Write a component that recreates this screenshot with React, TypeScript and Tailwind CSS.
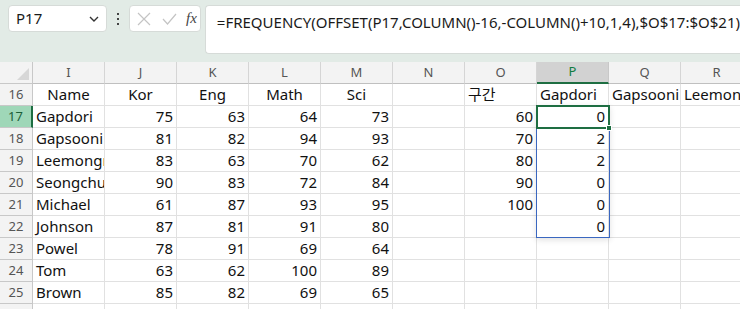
type Cell = { v: string; a?: "l" | "r" | "c" };

const cols = ["I", "J", "K", "L", "M", "N", "O", "P", "Q", "R"];

const scores: [string, number, number, number, number, string, string][] = [
  ["Gapdori", 75, 63, 64, 73, "60", "0"],
  ["Gapsooni", 81, 82, 94, 93, "70", "2"],
  ["Leemongryong", 83, 63, 70, 62, "80", "2"],
  ["Seongchunhyang", 90, 83, 72, 84, "90", "0"],
  ["Michael", 61, 87, 93, 95, "100", "0"],
  ["Johnson", 87, 81, 91, 80, "", "0"],
  ["Powel", 78, 91, 69, 64, "", ""],
  ["Tom", 63, 62, 100, 89, "", ""],
  ["Brown", 85, 82, 69, 65, "", ""],
];

const headerRow: Cell[] = [
  { v: "Name", a: "c" },
  { v: "Kor", a: "c" },
  { v: "Eng", a: "c" },
  { v: "Math", a: "c" },
  { v: "Sci", a: "c" },
  { v: "" },
  { v: "구간", a: "l" },
  { v: "Gapdori", a: "l" },
  { v: "Gapsooni", a: "l" },
  { v: "Leemongryong", a: "l" },
];

const rows: { n: number; cells: Cell[] }[] = [
  { n: 16, cells: headerRow },
  ...scores.map((r, i) => ({
    n: 17 + i,
    cells: [
      { v: r[0], a: "l" as const },
      { v: String(r[1]), a: "r" as const },
      { v: String(r[2]), a: "r" as const },
      { v: String(r[3]), a: "r" as const },
      { v: String(r[4]), a: "r" as const },
      { v: "" },
      { v: r[5], a: "r" as const },
      { v: r[6], a: "r" as const },
      { v: "" },
      { v: "" },
    ],
  })),
  { n: 26, cells: cols.map(() => ({ v: "" })) },
];

const font = { fontFamily: '"Noto Sans", "Noto Sans CJK KR", sans-serif' };

function TopBar() {
  return (
    <div className="flex h-[62px] items-start bg-[#e2ebe6] pl-2 pt-[5px]">
      {/* name box */}
      <div className="flex h-[27px] w-[101px] items-center justify-between rounded-[4px] border border-[#d6dbd8] bg-white pl-[7px] pr-[7px]">
        <span className="text-[15px] text-[#1a1a1a]">P17</span>
        <svg width="10" height="6" viewBox="0 0 10 6" className="mt-[1px]">
          <path d="M1 1l4 4 4-4" fill="none" stroke="#333" strokeWidth="1.4" />
        </svg>
      </div>
      {/* dots */}
      <div className="flex h-[27px] w-[22px] flex-col items-center justify-center gap-[3px]">
        <span className="h-[2px] w-[2px] bg-[#444]" />
        <span className="h-[2px] w-[2px] bg-[#444]" />
        <span className="h-[2px] w-[2px] bg-[#444]" />
      </div>
      {/* cancel / enter / fx */}
      <div className="flex h-[27px] w-[73px] items-center rounded-[4px] border border-[#d6dbd8] bg-white pl-[7px]">
        <svg width="14" height="14" viewBox="0 0 14 14">
          <path d="M1 1l12 12M13 1L1 13" stroke="#c4c4c4" strokeWidth="1.2" />
        </svg>
        <svg width="15" height="12" viewBox="0 0 15 12" className="ml-[11px]">
          <path d="M1 6l4.5 5L14 1" fill="none" stroke="#c4c4c4" strokeWidth="1.2" />
        </svg>
        <span
          className="ml-[9px] text-[15px] italic text-[#444]"
          style={{ fontFamily: '"Liberation Serif", serif' }}
        >
          fx
        </span>
      </div>
      {/* formula */}
      <div className="ml-[4px] h-[49px] flex-1 rounded-l-[4px] border border-r-0 border-[#d6dbd8] bg-white pl-[11px] pt-[4px]">
        <span className="whitespace-nowrap text-[15px] text-[#1a1a1a]">
          =FREQUENCY(OFFSET(P17,COLUMN()-16,-COLUMN()+10,1,4),$O$17:$O$21)
        </span>
      </div>
    </div>
  );
}

function HeaderRow() {
  return (
    <div className="flex h-[22px]">
      <div className="relative h-[22px] w-[33px] shrink-0 border-r border-b border-[#c8c8c8] bg-[#f3f3f3]">
        <div className="absolute bottom-[3px] right-[3px] h-0 w-0 border-b-[12px] border-l-[12px] border-b-[#d7d7d7] border-l-transparent" />
      </div>
      {cols.map((c) => (
        <div
          key={c}
          className={
            c === "P"
              ? "flex h-[22px] w-[72px] shrink-0 items-center justify-center border-r border-b-2 border-r-[#c8c8c8] border-b-[#1e6e42] bg-[#d2d2d2] text-[13px] text-[#107c41]"
              : "flex h-[22px] w-[72px] shrink-0 items-center justify-center border-r border-b border-[#d5d5d5] border-b-[#c0c0c0] bg-[#f3f3f3] text-[13px] text-[#555]"
          }
        >
          {c}
        </div>
      ))}
    </div>
  );
}

function Row({ n, cells }: { n: number; cells: Cell[] }) {
  const active = n === 17;
  return (
    <div className="flex h-[22px]">
      <div
        className={
          active
            ? "flex h-[22px] w-[33px] shrink-0 items-center justify-center border-r-2 border-b border-r-[#1e6e42] border-b-[#c8c8c8] bg-[#9fd7b8] text-[13px] text-[#1b5e38]"
            : "flex h-[22px] w-[33px] shrink-0 items-center justify-center border-r border-b border-[#c8c8c8] bg-[#f3f3f3] text-[13px] text-[#555]"
        }
      >
        {n}
      </div>
      {cells.map((c, i) => (
        <div
          key={i}
          className={
            "flex h-[22px] w-[72px] shrink-0 items-center overflow-hidden whitespace-nowrap border-r border-b border-[#e1e1e1] px-[3px] text-[15px] text-[#111] " +
            (c.a === "r" ? "justify-end" : c.a === "c" ? "justify-center" : "justify-start")
          }
        >
          {c.v}
        </div>
      ))}
    </div>
  );
}

export default function App() {
  return (
    <div className="h-[309px] w-[740px] overflow-hidden bg-white" style={font}>
      <TopBar />
      <div className="relative">
        <HeaderRow />
        {rows.map((r) => (
          <Row key={r.n} n={r.n} cells={r.cells} />
        ))}
        {/* spill range P17:P22 */}
        <div className="pointer-events-none absolute left-[536px] top-[43px] h-[133px] w-[74px] border border-[#3a67c0] shadow-[0_2px_6px_rgba(0,0,0,0.12)]" />
        {/* active cell P17 */}
        <div className="pointer-events-none absolute left-[536px] top-[43px] h-[24px] w-[74px] border-2 border-[#1e6e42]" />
        <div className="pointer-events-none absolute left-[606px] top-[63px] h-[6px] w-[6px] border border-white bg-[#1e6e42]" />
      </div>
    </div>
  );
}
